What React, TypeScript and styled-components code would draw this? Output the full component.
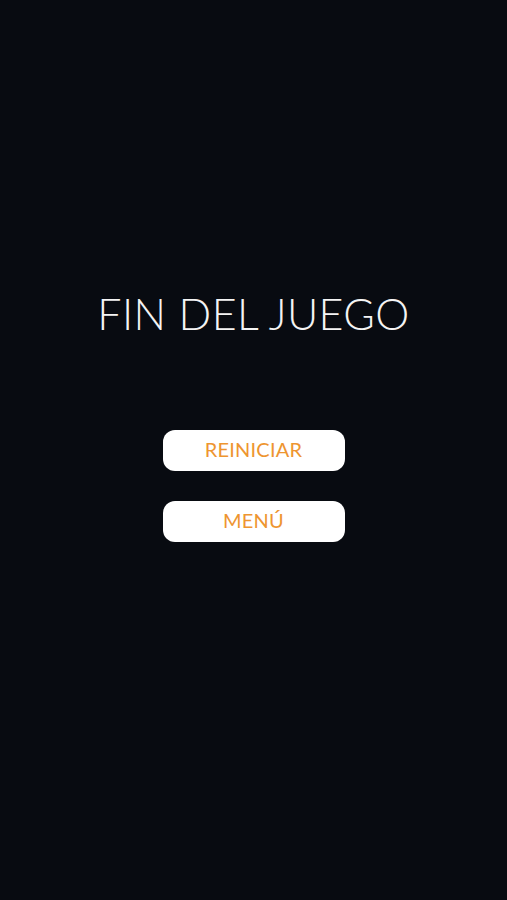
import React from 'react';
import styled, { createGlobalStyle } from 'styled-components';

const GlobalStyle = createGlobalStyle`
  html, body {
    margin: 0;
    padding: 0;
    background: #080b11;
  }
`;

const Screen = styled.div`
  width: 507px;
  height: 900px;
  background: #080b11;
  display: flex;
  flex-direction: column;
  align-items: center;
  font-family: 'Lato', 'Noto Sans', sans-serif;
`;

const Title = styled.h1`
  margin: 287px 0 0;
  font-size: 43px;
  font-weight: 300;
  letter-spacing: 0.4px;
  line-height: 54px;
  color: #f4f4f4;
`;

const ButtonStack = styled.div`
  display: flex;
  flex-direction: column;
  gap: 30px;
  margin-top: 89px;
`;

const MenuButton = styled.button`
  width: 182px;
  height: 41px;
  padding: 0 0 4px;
  border: none;
  border-radius: 12px;
  background: #ffffff;
  color: #ee9530;
  font-family: 'Lato', 'Noto Sans', sans-serif;
  font-size: 20px;
  font-weight: 400;
  letter-spacing: 0.2px;
  cursor: pointer;
`;

export default function App() {
  return (
    <>
      <GlobalStyle />
      <Screen>
        <Title>FIN DEL JUEGO</Title>
        <ButtonStack>
          <MenuButton>REINICIAR</MenuButton>
          <MenuButton>MENÚ</MenuButton>
        </ButtonStack>
      </Screen>
    </>
  );
}
